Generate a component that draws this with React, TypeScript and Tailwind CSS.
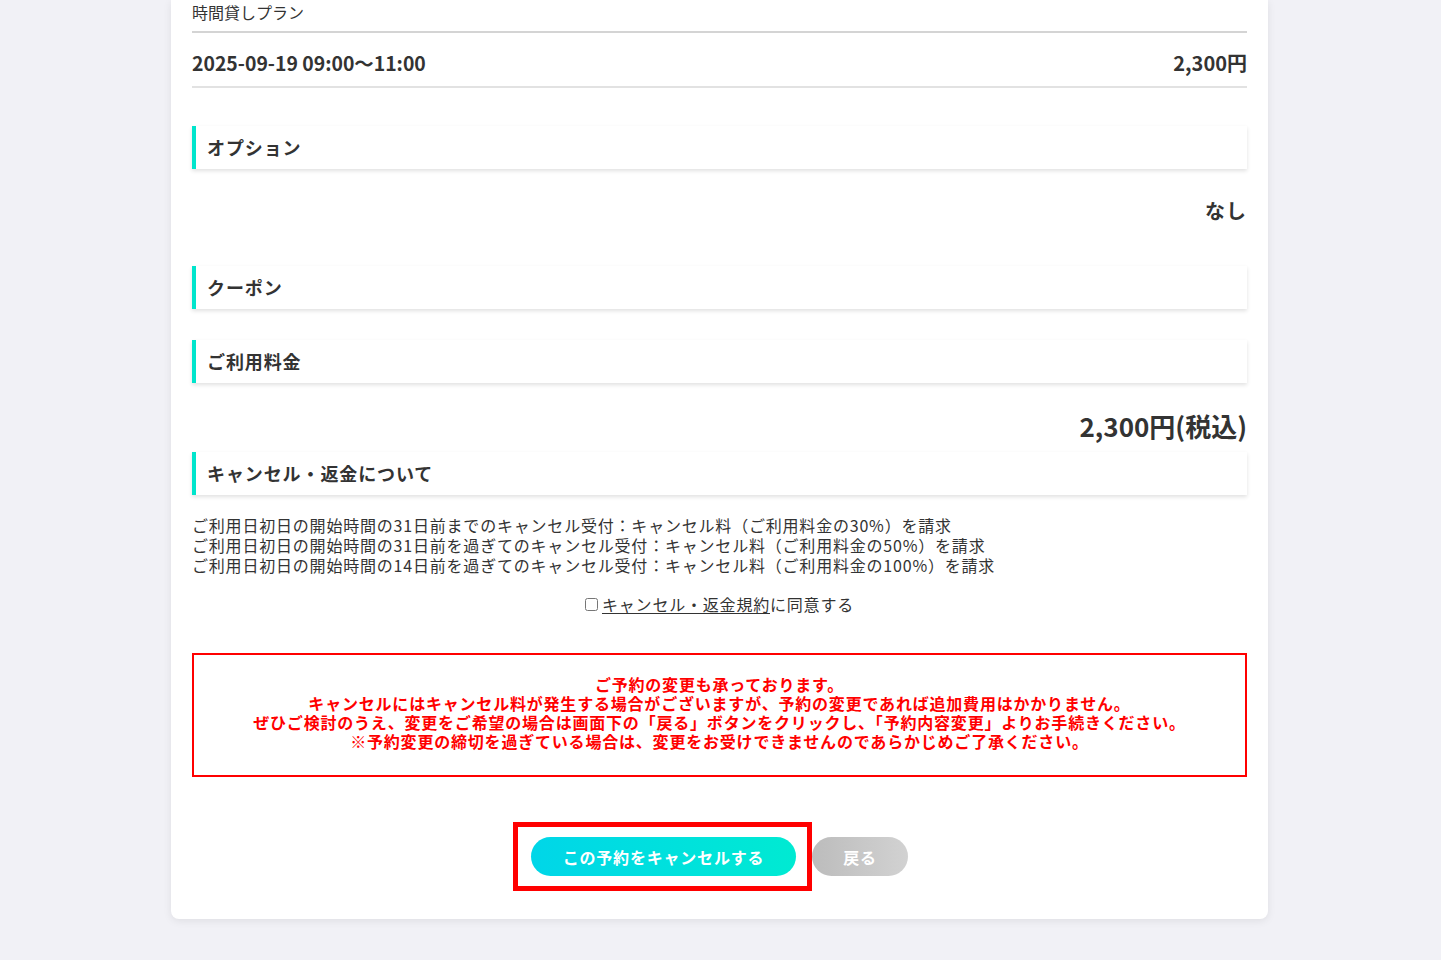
import React from "react";

const font = { fontFamily: '"Noto Sans CJK JP", "Noto Sans", sans-serif' };

function SectionHeader({ title }: { title: string }) {
  return (
    <div className="flex h-[43px] items-center border-l-4 border-[#00e5cc] bg-white pl-[11px] shadow-[0_2px_4px_rgba(0,0,0,0.12)]">
      <span className="text-[18px] font-bold tracking-[0.05em] text-[#333]">{title}</span>
    </div>
  );
}

export default function App() {
  return (
    <div className="min-h-[960px] w-full bg-[#f1f1f6] pr-[2px]" style={font}>
      <div className="mx-auto w-[1097px] overflow-hidden rounded-b-[8px] bg-white px-[21px] pb-[43px] shadow-[0_2px_8px_rgba(0,0,0,0.08)]">
        <div className="h-[33px] border-b-2 border-[#d4d4d4] text-[16px] leading-[24px] text-[#333]">
          時間貸しプラン
        </div>
        <div className="flex h-[55px] items-center justify-between border-b-2 border-[#e2e2e2] pt-[6px] text-[20px] font-bold text-[#333]">
          <span className="text-[19.4px]">2025-09-19 09:00〜11:00</span>
          <span>2,300円</span>
        </div>

        <div className="mt-[38px]">
          <SectionHeader title="オプション" />
        </div>
        <div className="mt-[28px] text-right text-[20px] font-bold leading-[28px] tracking-[0.05em] text-[#333]">
          なし
        </div>
        <div className="mt-[41px]">
          <SectionHeader title="クーポン" />
        </div>
        <div className="mt-[31px]">
          <SectionHeader title="ご利用料金" />
        </div>
        <div className="mt-[25px] text-right text-[26px] font-bold leading-[36px] text-[#333]">
          2,300円(税込)
        </div>
        <div className="mt-[8px]">
          <SectionHeader title="キャンセル・返金について" />
        </div>
        <div className="mt-[20px] text-[16px] leading-[20px] tracking-[0.05em] text-[#333]">
          <p>ご利用日初日の開始時間の31日前までのキャンセル受付：キャンセル料（ご利用料金の30%）を請求</p>
          <p>ご利用日初日の開始時間の31日前を過ぎてのキャンセル受付：キャンセル料（ご利用料金の50%）を請求</p>
          <p>ご利用日初日の開始時間の14日前を過ぎてのキャンセル受付：キャンセル料（ご利用料金の100%）を請求</p>
        </div>
        <div className="mt-[19px] flex items-center justify-center text-[16px] leading-[20px] tracking-[0.05em] text-[#333]">
          <input type="checkbox" className="mr-[4px] h-[13px] w-[13px]" />
          <span className="underline underline-offset-2">キャンセル・返金規約</span>
          <span>に同意する</span>
        </div>
        <div className="mt-[39px] flex h-[124px] items-center justify-center border-2 border-[#ff0000] pb-[4px] text-center text-[16px] font-bold leading-[19px] tracking-[0.05em] text-[#ff0000]">
          <div>
            <p>ご予約の変更も承っております。</p>
            <p>キャンセルにはキャンセル料が発生する場合がございますが、予約の変更であれば追加費用はかかりません。</p>
            <p>ぜひご検討のうえ、変更をご希望の場合は画面下の「戻る」ボタンをクリックし、「予約内容変更」よりお手続きください。</p>
            <p>※予約変更の締切を過ぎている場合は、変更をお受けできませんのであらかじめご了承ください。</p>
          </div>
        </div>
        <div className="mt-[60px] flex items-center justify-center gap-[16px]">
          <div className="relative">
            <button className="flex h-[39px] w-[265px] items-center justify-center rounded-full bg-gradient-to-r from-[#00d6e8] to-[#00ead2] text-[16px] font-bold tracking-[0.05em] text-white">
              この予約をキャンセルする
            </button>
            <div className="pointer-events-none absolute -bottom-[15px] -left-[18px] -right-[16px] -top-[15px] border-[5px] border-[#ff0000]" />
          </div>
          <button className="flex h-[39px] w-[96px] items-center justify-center rounded-full bg-gradient-to-r from-[#bcbcbc] to-[#d2d2d2] text-[16px] font-bold tracking-[0.05em] text-white">
            戻る
          </button>
        </div>
      </div>
    </div>
  );
}
